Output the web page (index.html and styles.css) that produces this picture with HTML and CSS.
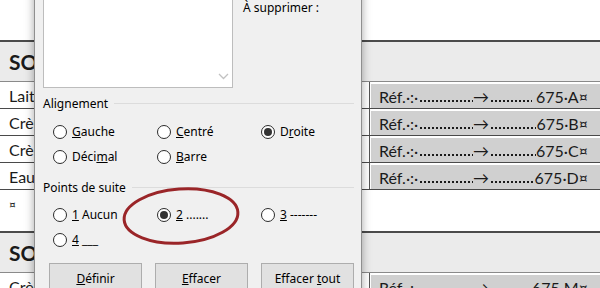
FILE: index.html
```html
<!DOCTYPE html>
<html lang="fr">
<head>
    <meta charset="UTF-8">
    <title>Tabulations</title>
    <link rel="stylesheet" href="styles.css">
</head>
<body>
    <div class="page">
        <div class="tbl">
            <div class="tbl-head">SOLDES</div>
            <div class="tbl-row">
                <div class="cell-name">Lait</div>
                <div class="cell-ref"><div class="shade"><span class="tab">Réf.·:·<span class="lead"></span></span>→<span class="lead"></span><span class="val gap">675·A¤</span></div></div>
            </div>
            <div class="tbl-row">
                <div class="cell-name">Crème</div>
                <div class="cell-ref"><div class="shade"><span class="tab">Réf.·:·<span class="lead"></span></span>→<span class="lead"></span><span class="val">675·B¤</span></div></div>
            </div>
            <div class="tbl-row">
                <div class="cell-name">Crème</div>
                <div class="cell-ref"><div class="shade"><span class="tab">Réf.·:·<span class="lead"></span></span>→<span class="lead"></span><span class="val">675·C¤</span></div></div>
            </div>
            <div class="tbl-row">
                <div class="cell-name">Eau</div>
                <div class="cell-ref"><div class="shade"><span class="tab">Réf.·:·<span class="lead"></span></span>→<span class="lead"></span><span class="val">675·D¤</span></div></div>
            </div>
        </div>

        <p class="mark">¤</p>

        <div class="tbl">
            <div class="tbl-head">SOLDES</div>
            <div class="tbl-row">
                <div class="cell-name">Crème</div>
                <div class="cell-ref"><div class="shade"><span class="tab">Réf.·:·<span class="lead"></span></span>→<span class="lead"></span><span class="val">675·M¤</span></div></div>
            </div>
        </div>
    </div>

    <!-- boîte de dialogue Tabulations, posée sur le document -->
    <div class="dialog">
        <div class="dlg-top">
            <div class="listbox">
                <div class="list-area"></div>
                <div class="scrollbar">
                    <svg width="11" height="7" viewBox="0 0 11 7"><path d="M1 1 L5.5 5.5 L10 1" fill="none" stroke="#c2c2c2" stroke-width="1.3"/></svg>
                </div>
            </div>
            <div class="label-sup">À supprimer :</div>
        </div>

        <div class="group-title">Alignement</div>
        <div class="radios">
            <label class="radio"><span class="dot"></span><span><u>G</u>auche</span></label>
            <label class="radio"><span class="dot"></span><span><u>C</u>entré</span></label>
            <label class="radio"><span class="dot on"></span><span>D<u>r</u>oite</span></label>
            <label class="radio"><span class="dot"></span><span>Déci<u>m</u>al</span></label>
            <label class="radio"><span class="dot"></span><span><u>B</u>arre</span></label>
        </div>

        <div class="group-title second">Points de suite</div>
        <div class="radios leaders">
            <label class="radio"><span class="dot"></span><span><u>1</u> Aucun</span></label>
            <label class="radio"><span class="dot on"></span><span><u>2</u> .......</span></label>
            <label class="radio"><span class="dot"></span><span><u>3</u> -------</span></label>
            <label class="radio"><span class="dot"></span><span><u>4</u> ___</span></label>
        </div>

        <div class="buttons">
            <button><u>D</u>éfinir</button>
            <button><u>E</u>ffacer</button>
            <button>Effacer <u>t</u>out</button>
        </div>
    </div>

    <svg class="ring" width="134" height="72" viewBox="0 0 134 72">
        <ellipse cx="64" cy="35" rx="57" ry="27" fill="none" stroke="#9a2528" stroke-width="3" transform="rotate(-4 64 35)"/>
    </svg>
</body>
</html>
```

FILE: styles.css
```css
/* document Word + boîte de dialogue */
* {
    margin: 0;
    padding: 0;
    box-sizing: border-box;
}

body {
    width: 600px;
    height: 288px;
    overflow: hidden;
    position: relative;
    background: #fff;
    font-family: Lato, "Liberation Sans", sans-serif;
    color: #1a1a1a;
}

.page {
    width: 600px;
    padding-top: 40px;
}

.tbl {
    border-top: 2px solid #4b4b4b;
}

.tbl-head {
    height: 40px;
    background: #ebebeb;
    border-bottom: 1px solid #8a8a8a;
    display: flex;
    align-items: center;
    padding-left: 9px;
    font-size: 21px;
    font-weight: 700;
}

.tbl-row {
    display: grid;
    grid-template-columns: 370px 1fr;
    height: 27px;
    border-bottom: 1px solid #4a4a4a;
    font-size: 16px;
}

.cell-name {
    display: flex;
    align-items: center;
    padding-left: 9px;
    border-right: 1px solid #555;
}

.cell-ref {
    padding: 2px 0 0 1px;
}

.shade {
    height: 100%;
    background: #d0d0d0;
    display: flex;
    align-items: center;
    padding: 0 12px 0 8px;
    white-space: nowrap;
}

.tab {
    display: flex;
    align-self: stretch;
    align-items: center;
    width: 94px;
}

/* points de suite de la tabulation */
.lead {
    flex: 1;
    align-self: stretch;
    background-image: radial-gradient(circle, #1a1a1a 0.8px, transparent 1.1px);
    background-size: 4px 4px;
    background-repeat: repeat-x;
    background-position: 1px 15px;
}

.val.gap {
    margin-left: 4px;
}

.mark {
    height: 41px;
    padding: 7px 0 0 9px;
    font-size: 12px;
}

/* dialog */
.dialog {
    position: absolute;
    left: 34px;
    top: -30px;
    width: 328px;
    height: 330px;
    background: #f0f0f0;
    border-left: 1px solid #8f8f8f;
    border-right: 1px solid #8f8f8f;
    box-shadow: 0 0 9px rgba(0, 0, 0, 0.35);
    font-family: "Noto Sans", "Open Sans", sans-serif;
    font-size: 12px;
    color: #000;
}

.dlg-top {
    display: flex;
}

.listbox {
    width: 190px;
    height: 118px;
    margin-left: 8px;
    background: #fff;
    border: 1px solid #bdbdbd;
    display: flex;
}

.list-area {
    flex: 1;
}

.scrollbar {
    width: 18px;
    display: flex;
    flex-direction: column;
    justify-content: flex-end;
    align-items: center;
    padding-bottom: 7px;
}

.label-sup {
    margin-left: 10px;
    padding-top: 30px;
    line-height: 16px;
}

.group-title {
    display: flex;
    align-items: center;
    gap: 6px;
    height: 16px;
    margin: 7px 7px 0 8px;
}

.group-title::after {
    content: '';
    flex: 1;
    height: 1px;
    background: #dcdcdc;
}

.group-title.second {
    margin-top: 10px;
}

.radios {
    display: grid;
    grid-template-columns: 104px 104px 1fr;
    grid-auto-rows: 25px;
    padding-left: 18px;
    margin-top: 8px;
}

.radios.leaders {
    margin-top: 7px;
}

.radio {
    display: flex;
    align-items: center;
    gap: 5px;
}

.dot {
    width: 14px;
    height: 14px;
    border: 1px solid #2b2b2b;
    border-radius: 50%;
    background: #fff;
    display: flex;
    align-items: center;
    justify-content: center;
}

.dot.on::after {
    content: '';
    width: 8px;
    height: 8px;
    border-radius: 50%;
    background: #333;
}

.buttons {
    display: flex;
    gap: 13px;
    margin: 11px 0 0 14px;
}

.buttons button {
    width: 93px;
    height: 30px;
    background: #e1e1e1;
    border: 1px solid #adadad;
    font-family: inherit;
    font-size: 12px;
    color: #000;
}

.ring {
    position: absolute;
    left: 117px;
    top: 181px;
}
```
